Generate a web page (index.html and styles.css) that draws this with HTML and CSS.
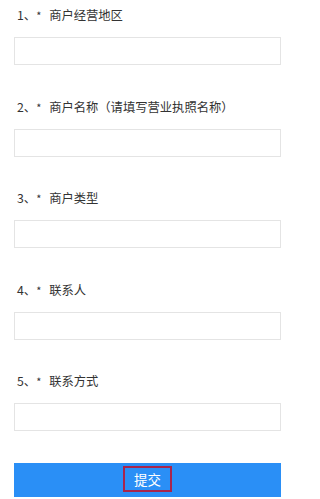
FILE: index.html
```html
<!DOCTYPE html>
<html lang="zh">
<head>
<meta charset="utf-8">
<title>商户信息</title>
<link rel="stylesheet" href="styles.css">
</head>
<body>
<form class="form">
  <div class="field">
    <label class="label">1、<span class="star">*</span>商户经营地区</label>
    <input class="input" type="text">
  </div>
  <div class="field">
    <label class="label">2、<span class="star">*</span>商户名称（请填写营业执照名称）</label>
    <input class="input" type="text">
  </div>
  <div class="field">
    <label class="label">3、<span class="star">*</span>商户类型</label>
    <input class="input" type="text">
  </div>
  <div class="field">
    <label class="label">4、<span class="star">*</span>联系人</label>
    <input class="input" type="text">
  </div>
  <div class="field last">
    <label class="label">5、<span class="star">*</span>联系方式</label>
    <input class="input" type="text">
  </div>
  <button class="submit" type="button"><span class="submit-text">提交</span></button>
</form>
</body>
</html>
```
FILE: styles.css
```css
html, body {
  margin: 0;
  padding: 0;
  background: #ffffff;
}
body {
  font-family: "Noto Sans CJK SC", "Noto Sans", sans-serif;
  color: #333333;
}
.form {
  display: flex;
  flex-direction: column;
  width: 267px;
  margin-left: 14px;
}
.field {
  display: flex;
  flex-direction: column;
  margin-bottom: 26.5px;
}
.field.last {
  margin-bottom: 0;
}
.label {
  display: block;
  height: 30px;
  line-height: 30px;
  font-size: 12.3px;
  padding-left: 3px;
  color: #333333;
  white-space: nowrap;
}
.star {
  display: inline-block;
  width: 13px;
  margin-left: 0;
  font-size: 11px;
}
.input {
  box-sizing: border-box;
  margin: 7px 0 0 0;
  height: 28px;
  width: 267px;
  border: 1px solid #e4e4e4;
  background: #ffffff;
  outline: none;
  padding: 0 6px;
}
.submit {
  margin-top: 32px;
  height: 34px;
  width: 267px;
  border: none;
  background: #2a8ff6;
  display: flex;
  align-items: center;
  justify-content: center;
  padding: 0;
}
.submit-text {
  box-sizing: border-box;
  width: 49px;
  height: 26px;
  border: 2px solid #a8254c;
  color: #ffffff;
  font-family: "Noto Sans CJK SC", sans-serif;
  font-size: 13.5px;
  line-height: 22px;
  text-align: center;
  margin-top: -2px;
}
```
